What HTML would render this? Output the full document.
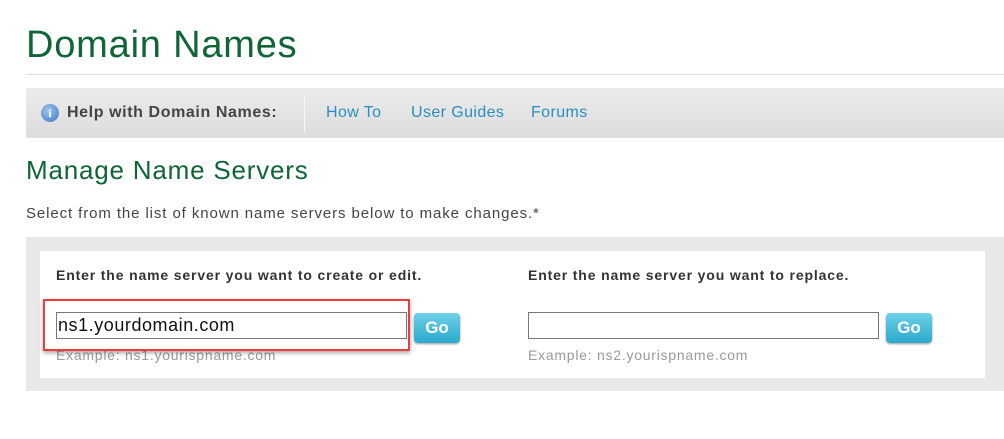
<!DOCTYPE html>
<html><head><style>
body{margin:0;width:1004px;height:439px;background:#fff;font-family:"Liberation Sans",sans-serif;position:relative;overflow:hidden}
.a{position:absolute}
h1{position:absolute;left:26px;top:24px;margin:0;font-weight:normal;font-size:38px;color:#0f6535;letter-spacing:0.8px}
.go{position:absolute;width:46px;height:30px;border-radius:4px;background:linear-gradient(#6fd0e8,#2aa9cc);color:#fff;font-weight:bold;font-size:17px;text-align:center;line-height:30px;box-shadow:0 1px 2px #999}
input{position:absolute;box-sizing:border-box;height:27px;border:1px solid #777;font-family:"Liberation Sans",sans-serif;font-size:18px;padding:0 1px;background:#fff;letter-spacing:0.55px;color:#111}
.lab{position:absolute;font-weight:bold;font-size:14px;color:#333;letter-spacing:0.85px}
.ex{position:absolute;font-size:14px;color:#999;letter-spacing:0.75px}
.nav{position:absolute;top:104px;font-size:16px;color:#2a8fc0;letter-spacing:0.4px}
</style></head><body>
<h1>Domain Names</h1>
<div class="a" style="left:26px;top:74px;width:978px;height:1px;background:#ddd"></div>
<div class="a" style="left:26px;top:88px;width:978px;height:50px;background:linear-gradient(#ececec,#dcdcdc)"></div>
<div class="a" style="left:41px;top:104px;width:18px;height:18px;border-radius:50%;background:radial-gradient(circle at 40% 35%,#9cc3ee,#3f78c0);color:#fff;font-size:12px;font-weight:bold;text-align:center;line-height:18px;font-family:'Liberation Serif',serif">i</div>
<div class="a" style="left:67px;top:104px;font-size:16px;font-weight:bold;color:#444;letter-spacing:0.6px">Help with Domain Names:</div>
<div class="a" style="left:304px;top:96px;width:1px;height:36px;background:#f8f8f8"></div>
<div class="nav" style="left:326px">How To</div>
<div class="nav" style="left:411px">User Guides</div>
<div class="nav" style="left:531px">Forums</div>
<div class="a" style="left:26px;top:155px;font-size:26px;color:#0f6535;letter-spacing:0.8px">Manage Name Servers</div>
<div class="a" style="left:26px;top:205px;font-size:15px;color:#444;letter-spacing:0.9px">Select from the list of known name servers below to make changes.*</div>
<div class="a" style="left:26px;top:237px;width:978px;height:154px;background:#e8e8e8"></div>
<div class="a" style="left:40px;top:251px;width:945px;height:127px;background:#fff"></div>
<div class="lab" style="left:56px;top:267px">Enter the name server you want to create or edit.</div>
<div class="lab" style="left:528px;top:267px">Enter the name server you want to replace.</div>
<input style="left:56px;top:312px;width:351px" value="ns1.yourdomain.com">
<div class="go" style="left:414px;top:313px">Go</div>
<input style="left:528px;top:312px;width:351px" value="">
<div class="go" style="left:886px;top:313px">Go</div>
<div class="ex" style="left:56px;top:347px">Example: ns1.yourispname.com</div>
<div class="ex" style="left:528px;top:347px">Example: ns2.yourispname.com</div>
<div class="a" style="left:43px;top:299px;width:363px;height:48px;border:2px solid #ee3b3b;box-shadow:0 2px 4px rgba(0,0,0,.35)"></div>
</body></html>
